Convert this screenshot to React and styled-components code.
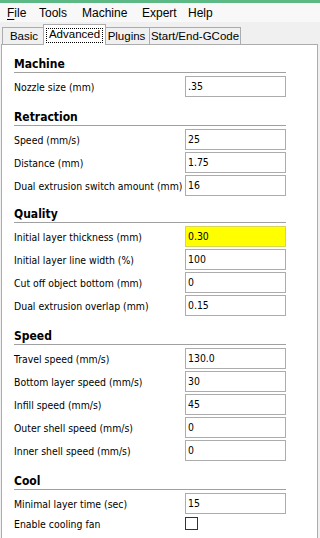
import React from "react";
import styled, { createGlobalStyle } from "styled-components";

const GlobalStyle = createGlobalStyle`
    html, body {
        margin: 0;
        padding: 0;
        background: #f0f0f0;
        width: 320px;
        height: 538px;
        overflow: hidden;
    }
`;

const labelFont = `"DejaVu Sans Condensed", "DejaVu Sans", sans-serif`;
const uiFont = `"Liberation Sans", Arial, sans-serif`;

const Window = styled.div`
    width: 320px;
    height: 538px;
    overflow: hidden;
    background: #f0f0f0;
`;

const TitleStrip = styled.div`
    height: 3px;
    background: #5cb885;
`;

const MenuBar = styled.div`
    display: flex;
    height: 19px;
    background: #f8f8f8;
    font-family: ${uiFont};
    font-size: 12px;
    color: #000;
`;

const MenuItem = styled.div`
    display: flex;
    align-items: center;
    width: ${(p) => p.$w}px;
    padding-left: 7px;
    box-sizing: border-box;
    white-space: nowrap;

    u {
        text-decoration: underline;
        text-underline-offset: 2px;
    }
`;

const TabStrip = styled.div`
    display: flex;
    align-items: flex-end;
    height: 22px;
    padding-left: 2px;
    font-family: ${uiFont};
    font-size: 11.5px;
    color: #000;
`;

const Tab = styled.div`
    position: relative;
    display: flex;
    justify-content: center;
    box-sizing: border-box;
    width: ${(p) => (p.$active ? p.$w + 4 : p.$w)}px;
    height: ${(p) => (p.$active ? 21 : 17)}px;
    margin-left: ${(p) => (p.$first ? 0 : p.$active ? -3 : -1)}px;
    margin-right: ${(p) => (p.$active ? -2 : 0)}px;
    margin-bottom: ${(p) => (p.$active ? -1 : 0)}px;
    padding-top: ${(p) => (p.$active ? 3 : 1)}px;
    border: 1px solid #acacac;
    border-bottom: none;
    background: ${(p) => (p.$active ? "#ffffff" : "#f0f0f0")};
    z-index: ${(p) => (p.$active ? 2 : 1)};
    line-height: 14px;
    white-space: nowrap;
`;

const Focus = styled.span`
    display: block;
    width: 57px;
    height: 15px;
    box-sizing: border-box;
    border: 1px dotted #000;
    text-align: center;
    line-height: 11px;
`;

const Panel = styled.div`
    margin-left: 1px;
    width: 317px;
    height: 520px;
    box-sizing: border-box;
    border: 1px solid #acacac;
    background: #ffffff;
    padding: 0 31px 0 12px;
    font-family: ${labelFont};
    font-size: 10.4px;
    color: #000;
`;

const Section = styled.section`
    margin-top: ${(p) => p.$space}px;
`;

const Heading = styled.h2`
    margin: 0 0 3px;
    height: 16px;
    line-height: 16px;
    border-bottom: 1px solid #a0a0a0;
    font-size: 12px;
    font-weight: bold;
`;

const Rows = styled.div`
    display: flex;
    flex-direction: column;
    gap: 2px;
`;

const Row = styled.div`
    display: grid;
    grid-template-columns: minmax(0, 1fr) 101px;
    align-items: center;
    height: ${(p) => (p.$compact ? 15 : 21)}px;
`;

const Label = styled.span`
    white-space: nowrap;
`;

const Field = styled.div`
    box-sizing: border-box;
    height: 21px;
    padding-left: 2px;
    border: 1px solid ${(p) => (p.$warn ? "#d6d650" : "#acacac")};
    background: ${(p) => (p.$warn ? "#ffff00" : "#ffffff")};
    line-height: 19px;
`;

const Check = styled.span`
    display: block;
    width: 13px;
    height: 13px;
    box-sizing: border-box;
    border: 1px solid #333333;
    background: #ffffff;
`;

const menu = [
    { label: "File", key: "F", w: 32 },
    { label: "Tools", w: 43 },
    { label: "Machine", w: 60 },
    { label: "Expert", w: 46 },
    { label: "Help", w: 40 },
];

const tabs = [
    { label: "Basic", w: 44 },
    { label: "Advanced", w: 59, active: true },
    { label: "Plugins", w: 47 },
    { label: "Start/End-GCode", w: 92 },
];

const sections = [
    {
        title: "Machine",
        space: 11,
        rows: [{ label: "Nozzle size (mm)", value: ".35" }],
    },
    {
        title: "Retraction",
        space: 12,
        rows: [
            { label: "Speed (mm/s)", value: "25" },
            { label: "Distance (mm)", value: "1.75" },
            { label: "Dual extrusion switch amount (mm)", value: "16" },
        ],
    },
    {
        title: "Quality",
        space: 10,
        rows: [
            { label: "Initial layer thickness (mm)", value: "0.30", warn: true },
            { label: "Initial layer line width (%)", value: "100" },
            { label: "Cut off object bottom (mm)", value: "0" },
            { label: "Dual extrusion overlap (mm)", value: "0.15" },
        ],
    },
    {
        title: "Speed",
        space: 12,
        rows: [
            { label: "Travel speed (mm/s)", value: "130.0" },
            { label: "Bottom layer speed (mm/s)", value: "30" },
            { label: "Infill speed (mm/s)", value: "45" },
            { label: "Outer shell speed (mm/s)", value: "0" },
            { label: "Inner shell speed (mm/s)", value: "0" },
        ],
    },
    {
        title: "Cool",
        space: 12,
        rows: [
            { label: "Minimal layer time (sec)", value: "15" },
            { label: "Enable cooling fan", check: true },
        ],
    },
];

const App = () => {
    return (
        <Window>
            <GlobalStyle />
            <TitleStrip />
            <MenuBar>
                {menu.map((m) => (
                    <MenuItem key={m.label} $w={m.w}>
                        {m.key ? (
                            <span>
                                <u>{m.key}</u>
                                {m.label.slice(1)}
                            </span>
                        ) : (
                            m.label
                        )}
                    </MenuItem>
                ))}
            </MenuBar>
            <TabStrip>
                {tabs.map((t, i) => (
                    <Tab key={t.label} $w={t.w} $active={t.active} $first={i === 0}>
                        {t.active ? <Focus>{t.label}</Focus> : t.label}
                    </Tab>
                ))}
            </TabStrip>
            <Panel>
                {sections.map((s) => (
                    <Section key={s.title} $space={s.space}>
                        <Heading>{s.title}</Heading>
                        <Rows>
                            {s.rows.map((r) => (
                                <Row key={r.label} $compact={r.check}>
                                    <Label>{r.label}</Label>
                                    {r.check ? (
                                        <Check />
                                    ) : (
                                        <Field $warn={r.warn}>{r.value}</Field>
                                    )}
                                </Row>
                            ))}
                        </Rows>
                    </Section>
                ))}
            </Panel>
        </Window>
    );
};

export default App;
